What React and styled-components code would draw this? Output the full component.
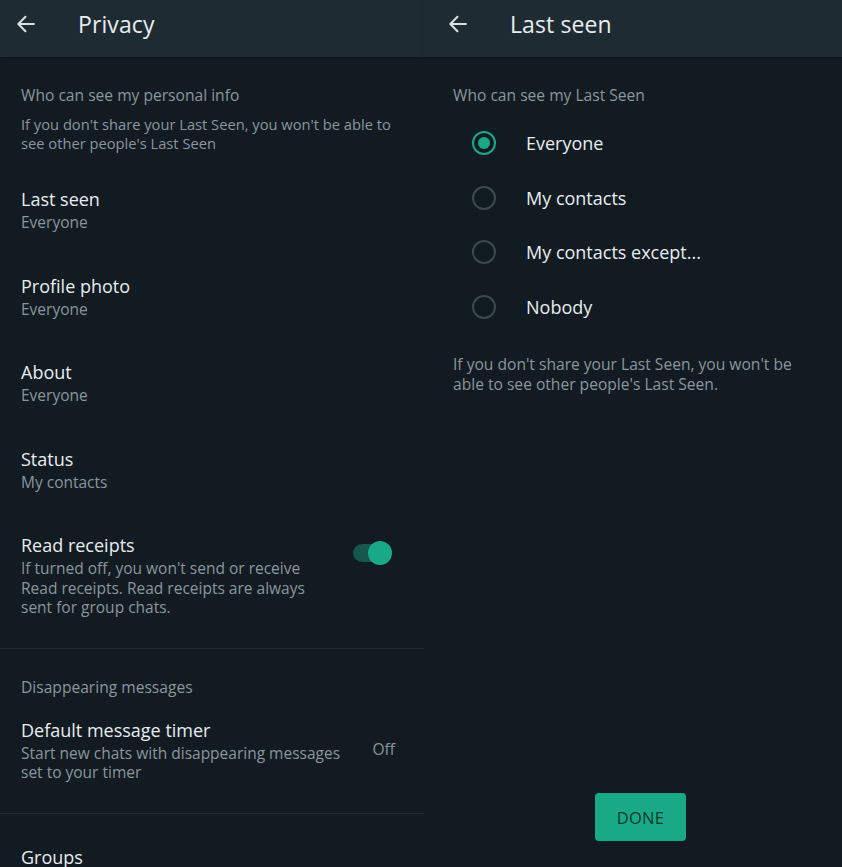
import React from "react";
import styled, { createGlobalStyle } from "styled-components";

const Global = createGlobalStyle`
  html, body { margin: 0; padding: 0; background: #121b22; }
  body { font-family: "Open Sans", "Noto Sans", sans-serif; -webkit-font-smoothing: antialiased; }
  * { box-sizing: border-box; }
`;

const Page = styled.div`
  display: flex;
  width: 842px;
  height: 867px;
  overflow: hidden;
  background: #121b22;
`;

const Panel = styled.div`
  display: flex;
  flex-direction: column;
  width: ${(p) => p.$width}px;
  flex: none;
  height: 100%;
`;

const Header = styled.header`
  height: 57px;
  flex: none;
  display: flex;
  align-items: center;
  background: #1f2b33;
  padding: 0 0 9px ${(p) => p.$pad}px;
  box-shadow: 0 1px 2px rgba(0, 0, 0, 0.25);
`;

const BackButton = styled.span`
  display: flex;
  width: 20px;
  height: 20px;
  color: #d9dee1;
  margin-right: 42px;
`;

const Title = styled.h1`
  margin: 0;
  font-size: 23px;
  font-weight: 400;
  color: #e9edef;
  letter-spacing: 0.1px;
`;

const Body = styled.div`
  flex: 1;
  display: flex;
  flex-direction: column;
  min-height: 0;
`;

const Section = styled.section`
  padding: 10px 0 ${(p) => (p.$last ? 0 : 10)}px;
  border-bottom: ${(p) => (p.$last ? "none" : "1px solid #202b32")};
`;

const SectionLabel = styled.div`
  padding: 18px 21px 0;
  font-size: 15.6px;
  line-height: 20px;
  color: #8a969d;
`;

const SectionNote = styled.div`
  padding: 0 30px 0 21px;
  margin: 9.5px 0 13.5px;
  font-size: 14.7px;
  line-height: 19px;
  color: #8a969d;
`;

const Item = styled.div`
  display: flex;
  align-items: ${(p) => (p.$alignTop ? "flex-start" : "center")};
  padding: 19px 33px 20px 21px;
`;

const ItemText = styled.div`
  flex: 1;
  min-width: 0;
`;

const ItemTitle = styled.div`
  font-size: 18px;
  line-height: 28px;
  color: #e9edef;
`;

const ItemSub = styled.div`
  font-size: 15.5px;
  line-height: 19.5px;
  color: #8a969d;
`;

const Track = styled.div`
  position: relative;
  flex: none;
  width: 38px;
  height: 18px;
  margin: 13px 0 0 20px;
  border-radius: 9px;
  background: #17564a;
`;

const Thumb = styled.div`
  position: absolute;
  right: -1px;
  top: -3px;
  width: 24px;
  height: 24px;
  border-radius: 50%;
  background: #1aa987;
`;

const SideValue = styled.div`
  flex: none;
  margin: 0 -4px 0 14px;
  font-size: 15.5px;
  color: #8a969d;
`;

const RadioList = styled.div`
  margin-top: 10.7px;
  display: flex;
  flex-direction: column;
`;

const RadioRow = styled.label`
  display: flex;
  align-items: center;
  height: 54.7px;
  padding-left: 48px;
  font-size: 18px;
  color: #e9edef;
`;

const RadioRing = styled.span`
  flex: none;
  width: 24px;
  height: 24px;
  border-radius: 50%;
  border: 2.5px solid ${(p) => (p.$on ? "#1aa987" : "#3b4950")};
  display: flex;
  align-items: center;
  justify-content: center;
  margin-right: 30px;
  &::after {
    content: "";
    width: 12px;
    height: 12px;
    border-radius: 50%;
    background: ${(p) => (p.$on ? "#1aa987" : "transparent")};
  }
`;

const Footnote = styled.div`
  margin-top: 20px;
  padding: 0 29px 0 29px;
  font-size: 15.6px;
  line-height: 20px;
  color: #8a969d;
`;

const ButtonBar = styled.div`
  margin-top: auto;
  display: flex;
  justify-content: center;
  padding: 0 0 26px 15px;
`;

const DoneButton = styled.button`
  width: 91px;
  height: 48px;
  border: none;
  border-radius: 4px;
  background: #1aa987;
  color: #0b3a30;
  font-family: inherit;
  font-size: 16.5px;
  letter-spacing: 0.3px;
`;

const RightLabel = styled(SectionLabel)`
  padding: 28px 29px 0;
`;

function Arrow() {
  return (
    <svg width="20" height="20" viewBox="0 0 20 20" fill="none" stroke="currentColor" strokeWidth="2" strokeLinecap="round" strokeLinejoin="round">
      <path d="M18 10H2.5M9.5 2.8L2.3 10l7.2 7.2" />
    </svg>
  );
}

const privacyItems = [
  { title: "Last seen", sub: "Everyone" },
  { title: "Profile photo", sub: "Everyone" },
  { title: "About", sub: "Everyone" },
  { title: "Status", sub: "My contacts" },
];

const options = ["Everyone", "My contacts", "My contacts except...", "Nobody"];

export default function App() {
  return (
    <>
      <Global />
      <Page>
        <Panel $width={424}>
          <Header $pad={16}>
            <BackButton><Arrow /></BackButton>
            <Title>Privacy</Title>
          </Header>
          <Body>
            <Section>
              <SectionLabel>Who can see my personal info</SectionLabel>
              <SectionNote>
                If you don't share your Last Seen, you won't be able to see other people's Last Seen
              </SectionNote>
              {privacyItems.map((it) => (
                <Item key={it.title}>
                  <ItemText>
                    <ItemTitle>{it.title}</ItemTitle>
                    <ItemSub>{it.sub}</ItemSub>
                  </ItemText>
                </Item>
              ))}
              <Item $alignTop>
                <ItemText>
                  <ItemTitle>Read receipts</ItemTitle>
                  <ItemSub>
                    If turned off, you won't send or receive Read receipts. Read receipts are always sent for group chats.
                  </ItemSub>
                </ItemText>
                <Track>
                  <Thumb />
                </Track>
              </Item>
            </Section>
            <Section>
              <SectionLabel>Disappearing messages</SectionLabel>
              <Item>
                <ItemText>
                  <ItemTitle>Default message timer</ItemTitle>
                  <ItemSub>Start new chats with disappearing messages set to your timer</ItemSub>
                </ItemText>
                <SideValue>Off</SideValue>
              </Item>
            </Section>
            <Section $last>
              <Item>
                <ItemText>
                  <ItemTitle>Groups</ItemTitle>
                </ItemText>
              </Item>
            </Section>
          </Body>
        </Panel>
        <Panel $width={418}>
          <Header $pad={24}>
            <BackButton><Arrow /></BackButton>
            <Title>Last seen</Title>
          </Header>
          <Body>
            <RightLabel>Who can see my Last Seen</RightLabel>
            <RadioList>
              {options.map((o, i) => (
                <RadioRow key={o}>
                  <RadioRing $on={i === 0} />
                  {o}
                </RadioRow>
              ))}
            </RadioList>
            <Footnote>
              If you don't share your Last Seen, you won't be able to see other people's Last Seen.
            </Footnote>
            <ButtonBar>
              <DoneButton>DONE</DoneButton>
            </ButtonBar>
          </Body>
        </Panel>
      </Page>
    </>
  );
}
